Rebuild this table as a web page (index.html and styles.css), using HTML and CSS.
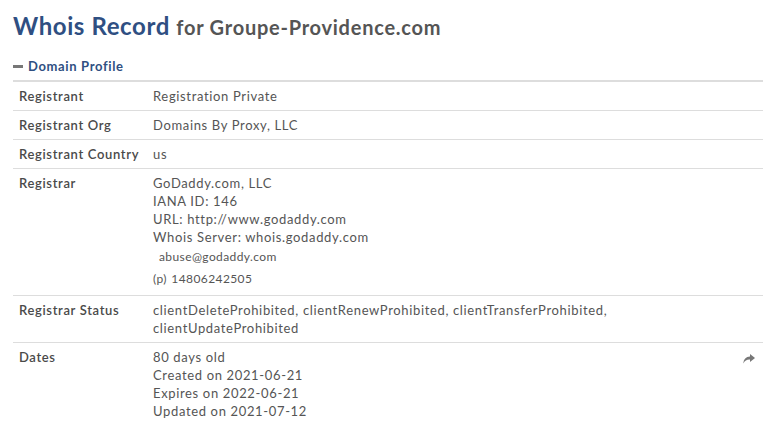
FILE: index.html
```html
<!DOCTYPE html>
<html lang="en">
<head>
  <meta charset="UTF-8">
  <meta name="viewport" content="width=device-width, initial-scale=1.0">
  <title>Whois Record for Groupe-Providence.com</title>
  <link rel="stylesheet" href="styles.css">
</head>
<body>
  <div class="container">
    <h1 class="title">Whois Record <span class="domain">for Groupe-Providence.com</span></h1>

    <!-- Domain profile -->
    <div class="profile-head">
      <span class="dash"></span>
      <span>Domain Profile</span>
    </div>

    <div class="profile">
      <div class="row">
        <div class="label">Registrant</div>
        <div class="value">Registration Private</div>
      </div>
      <div class="row">
        <div class="label">Registrant Org</div>
        <div class="value">Domains By Proxy, LLC</div>
      </div>
      <div class="row">
        <div class="label">Registrant Country</div>
        <div class="value">us</div>
      </div>
      <div class="row">
        <div class="label">Registrar</div>
        <div class="value">
          GoDaddy.com, LLC<br>
          IANA ID: 146<br>
          URL: http://www.godaddy.com<br>
          Whois Server: whois.godaddy.com
          <div class="contact email">abuse@godaddy.com</div>
          <div class="contact"><span class="tag">(p)</span> 14806242505</div>
        </div>
      </div>
      <div class="row">
        <div class="label">Registrar Status</div>
        <div class="value">clientDeleteProhibited, clientRenewProhibited, clientTransferProhibited, clientUpdateProhibited</div>
      </div>
      <div class="row">
        <div class="label">Dates</div>
        <div class="value">
          80 days old<br>
          Created on 2021-06-21<br>
          Expires on 2022-06-21<br>
          Updated on 2021-07-12
        </div>
        <div class="share">
          <svg width="12" height="10" viewBox="0 0 12 10"><path d="M7 0 L12 4 L7 8 L7 5.6 C4 5.4 2 6.4 0.4 9.4 C0.6 5 3 2.6 7 2.4 Z" fill="#777"/></svg>
        </div>
      </div>
    </div>
  </div>
</body>
</html>
```

FILE: styles.css
```css
body {
  margin: 0;
  font-family: Lato, "Open Sans", Arial, sans-serif;
  color: #4a4a4a;
  background: #fff;
  letter-spacing: 0.65px;
}

.container {
  padding: 9px 11px 0 13px;
}

.title {
  margin: 0 0 14px 0;
  font-size: 24px;
  font-weight: bold;
  color: #2f4f82;
  line-height: 34px;
  letter-spacing: 0.6px;
}

.title .domain {
  font-size: 20px;
  color: #555;
  letter-spacing: 0.75px;
}

.profile-head {
  display: flex;
  align-items: center;
  gap: 5px;
  font-size: 13px;
  font-weight: bold;
  color: #2f4f82;
  padding-bottom: 6px;
  border-bottom: 2px solid #ddd;
}

.dash {
  width: 10px;
  height: 3px;
  background: #777;
}

.row {
  display: flex;
  padding: 5px 6px;
  border-bottom: 1px solid #ddd;
  font-size: 13px;
  line-height: 18px;
}

.label {
  width: 134px;
  flex-shrink: 0;
  font-weight: 600;
  color: #4a4a4a;
}

.value {
  flex: 1;
  color: #555;
}

.contact {
  font-size: 12px;
  line-height: 22px;
  letter-spacing: 0.4px;
}

.contact.email {
  padding-left: 6px;
}

.tag {
  font-size: 12px;
  margin-right: 1px;
}

.share {
  padding: 2px 2px 0 0;
}
```
